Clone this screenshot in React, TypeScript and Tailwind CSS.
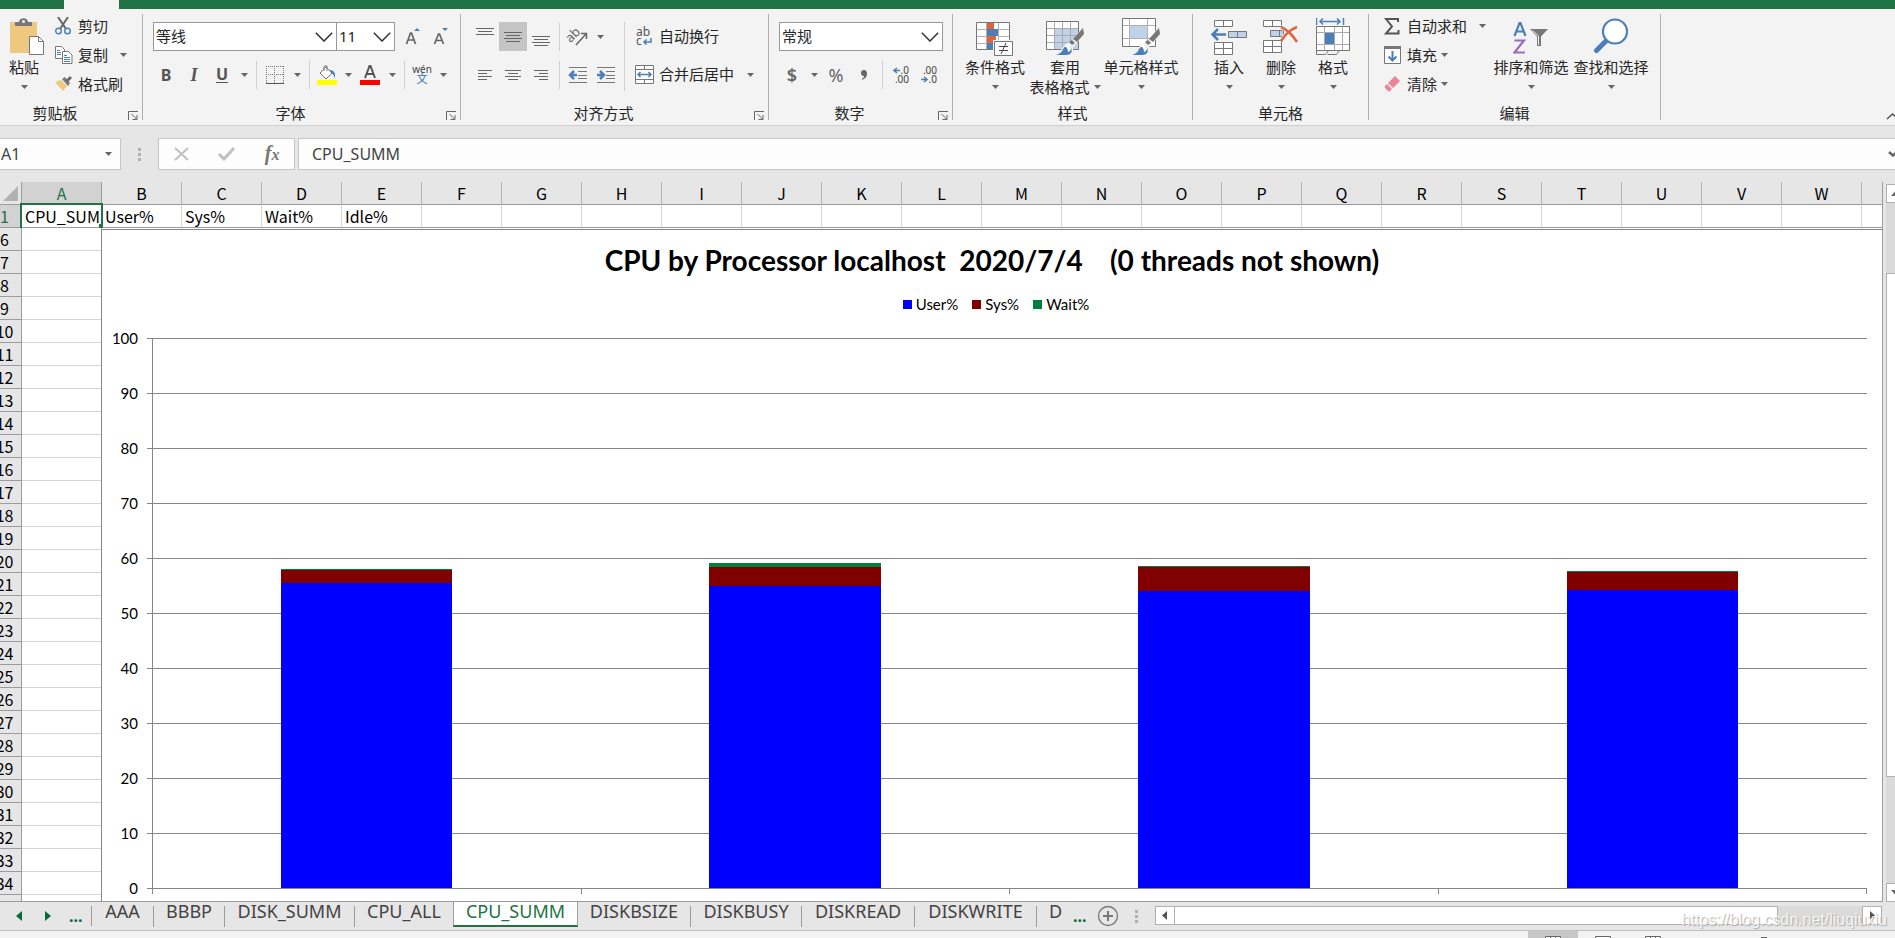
import type { ReactNode } from 'react'

const COLUMNS = 'ABCDEFGHIJKLMNOPQRSTUVWX'.split('')
const FIRST_ROW = ['CPU_SUMM', 'User%', 'Sys%', 'Wait%', 'Idle%']
const ROWS = Array.from({ length: 30 }, (_, i) => i + 6)
const AXIS = [100, 90, 80, 70, 60, 50, 40, 30, 20, 10, 0]

const CPUS = [
  { user: 55.5, sys: 2.36, wait: 0.19 },
  { user: 54.95, sys: 3.45, wait: 0.73 },
  { user: 54, sys: 4.4, wait: 0.19 },
  { user: 54.2, sys: 3.3, wait: 0.19 },
]

const TABS = [
  { name: 'AAA', width: 'w-[62px]' },
  { name: 'BBBP', width: 'w-[71px]' },
  { name: 'DISK_SUMM', width: 'w-[130px]' },
  { name: 'CPU_ALL', width: 'w-[98px]' },
  { name: 'CPU_SUMM', width: 'w-[125px]' },
  { name: 'DISKBSIZE', width: 'w-[113px]' },
  { name: 'DISKBUSY', width: 'w-[111px]' },
  { name: 'DISKREAD', width: 'w-[113px]' },
  { name: 'DISKWRITE', width: 'w-[122px]' },
]

function Caret() {
  return (
    <svg width="7" height="4" viewBox="0 0 7 4" className="shrink-0">
      <path d="M0 0h7L3.5 4z" fill="#666" />
    </svg>
  )
}

function CaretButton({ label }: { label: string }) {
  return (
    <button aria-label={label} className="flex h-7 w-4 items-center justify-center">
      <Caret />
    </button>
  )
}

function Tool({ label, width = 'w-7', active, children }: { label: string; width?: string; active?: boolean; children: ReactNode }) {
  return (
    <button aria-label={label} className={`flex h-[29px] shrink-0 items-center justify-center ${width} ${active ? 'bg-[#c5c5c5]' : ''}`}>
      {children}
    </button>
  )
}

function Separator() {
  return <div className="mx-1 h-7 w-px bg-[#d0d0d0]" />
}

function Group({ title, width, launcher, children }: { title: string; width: string; launcher?: boolean; children: ReactNode }) {
  return (
    <section className={`flex shrink-0 flex-col border-r border-[#b1b1b1] ${width}`}>
      <div className="flex flex-1">{children}</div>
      <div className="flex h-3.5 items-center">
        <h2 className="flex-1 text-center leading-[14px]">{title}</h2>
        {launcher && (
          <button aria-label={title + '设置'} className="w-[22px] pl-2 pt-1">
            <svg width="10" height="9" viewBox="0 0 10 9" fill="none" stroke="#666">
              <path d="M.5 9V.5H10M3.5 3l5 5M9 4v4.5H4.5" />
            </svg>
          </button>
        )}
      </div>
    </section>
  )
}

function BigButton({ icon, text, second, width }: { icon: ReactNode; text: string; second?: string; width: string }) {
  return (
    <button className={`flex shrink-0 flex-col items-center whitespace-nowrap ${width}`}>
      <span className="mb-px flex h-[38px] items-end justify-center">{icon}</span>
      <span className="leading-5">{text}</span>
      <span className="flex h-5 items-center gap-1 leading-5">
        {second}
        <Caret />
      </span>
    </button>
  )
}

function SmallButton({ icon, text, caret }: { icon: ReactNode; text: string; caret?: string }) {
  return (
    <button className="flex h-7 items-center whitespace-nowrap">
      <span className="flex w-[23px] items-center">{icon}</span>
      {text}
      {caret && (
        <span className={caret}>
          <Caret />
        </span>
      )}
    </button>
  )
}

function Dropdown({ label, value, width }: { label: string; value: string; width: string }) {
  return (
    <div className={`relative shrink-0 ${width}`}>
      <select aria-label={label} defaultValue={value} className="h-[29px] w-full appearance-none border border-[#999] bg-white pl-0.5 text-[15px] text-[#262626]">
        <option>{value}</option>
      </select>
      <svg width="18" height="10" viewBox="0 0 18 10" className="pointer-events-none absolute right-1 top-2.5" fill="none" stroke="#333" strokeWidth="1.5">
        <path d="M.8.8 9 9 17.2.8" />
      </svg>
    </div>
  )
}

function Lines({ rows }: { rows: number[][] }) {
  return (
    <svg width="20" height="20" viewBox="0 0 20 20" stroke="#666">
      {rows.map(([x1, x2, y]) => (
        <path key={y} d={`M${x1} ${y}.5H${x2}`} />
      ))}
    </svg>
  )
}

function Indent({ right }: { right?: boolean }) {
  return (
    <svg width="20" height="18" viewBox="0 0 20 18" fill="none" stroke="#777">
      <path d="M1 1.5h18M10 5.5h9M10 9.5h9M10 12.5h9M1 16.5h18" />
      <path d={right ? 'M1 9h6M4 5l4 4-4 4' : 'M9 9H3M6 5 2 9l4 4'} stroke="#4a7fb8" strokeWidth="2.500" />
    </svg>
  )
}

function PasteIcon() {
  return (
    <svg width="35" height="38" viewBox="0 0 35 38" className="ml-1.5">
      <rect y="4" width="27" height="31" rx="1" fill="#edc87e" />
      <path d="M5 8V4h4c0-5 9-5 9 0h4v4z" fill="#777" />
      <circle cx="13.500" cy="3.500" r="1.500" fill="#f3f3f3" />
      <path d="M19.500 18.500h9l5 5v13h-14z" fill="#fff" stroke="#777" />
      <path d="M28.500 18.500v5h5" fill="none" stroke="#777" />
    </svg>
  )
}

function CutIcon() {
  return (
    <svg width="17" height="18" viewBox="0 0 17 18" fill="none">
      <path d="M3 0l8 12M13 0 5 12" stroke="#666" strokeWidth="2" />
      <circle cx="3.500" cy="14" r="2.800" stroke="#4a7fb8" strokeWidth="1.400" />
      <circle cx="12.500" cy="14" r="2.800" stroke="#4a7fb8" strokeWidth="1.400" />
    </svg>
  )
}

function CopyIcon() {
  return (
    <svg width="18" height="18" viewBox="0 0 18 18" fill="#fff" stroke="#777">
      <path d="M.5.5h6l3 3v9h-9z" />
      <path d="M2 4.500h3M2 6.500h4M2 8.500h4" stroke="#4a7fb8" />
      <path d="M7.500 5.500h6l3.500 3.500v8.500h-9.500z" />
      <path d="M9 9.500h3M9 11.500h6M9 13.500h6M9 15.500h6" stroke="#4a7fb8" />
    </svg>
  )
}

function BrushIcon() {
  return (
    <svg width="18" height="16" viewBox="0 0 18 16">
      <path d="M0 6 6 4l6 6-4 5z" fill="#edc87e" />
      <path d="m7 3 3-2 5 6-2 3z" fill="#777" />
      <path d="m11 4 4-4 2 2-4 4z" fill="#666" />
    </svg>
  )
}

function BordersIcon() {
  return (
    <svg width="18" height="18" viewBox="0 0 18 18" fill="none" stroke="#777">
      <path d="M.5 0v17M17.500 0v17M8.500 0v17M0 .5h18M0 8.500h18" strokeDasharray="1 1" />
      <path d="M0 17.500h18" stroke="#555" />
    </svg>
  )
}

function FillIcon() {
  return (
    <svg width="20" height="20" viewBox="0 0 20 20">
      <path d="m3 8 6-6 6 6-6 6z" fill="#fff" stroke="#777" />
      <path d="M7 6V2q0-2 3-1v5" fill="none" stroke="#777" />
      <path d="M13 5q6 0 5 9-1-5-4-6z" fill="#4a7fb8" />
      <path d="M0 15h20v5H0z" fill="#ff0" />
    </svg>
  )
}

function WrapIcon() {
  return (
    <svg width="18" height="18" viewBox="0 0 18 18" className="overflow-visible font-['Noto_Sans',sans-serif]">
      <text x="1" y="8" fontSize="12" fill="#555">ab</text>
      <text x="1" y="17" fontSize="12" fill="#555">c</text>
      <path d="M16 10v4H9M11.500 11.500 9 14l2.500 2.500" fill="none" stroke="#4a7fb8" strokeWidth="1.500" />
    </svg>
  )
}

function MergeIcon() {
  return (
    <svg width="19" height="19" viewBox="0 0 19 19" fill="#fff" stroke="#777">
      <path d="M.5.5h18v18H.5zM.5 4.500h18M.5 14.500h18M9.500.5v4M9.500 14.500v4" />
      <path d="M3 9.500h13M5.500 7 3 9.500 5.500 12M13.500 7 16 9.500 13.500 12" fill="none" stroke="#4a7fb8" strokeWidth="1.500" />
    </svg>
  )
}

function DecimalIcon({ less }: { less?: boolean }) {
  return (
    <svg width="18" height="18" viewBox="0 0 18 18" className="overflow-visible font-['Noto_Sans',sans-serif]" fontSize="10" fill="#444">
      <text x="17" y="8" textAnchor="end">{less ? '.00' : '.0'}</text>
      <text x="17" y="17" textAnchor="end">{less ? '.0' : '.00'}</text>
      <path d={less ? 'M1 13.500h6M4 11l3 2.500L4 16' : 'M8 4.500H2M5 2 2 4.500 5 7'} fill="none" stroke="#4a7fb8" strokeWidth="1.600" />
    </svg>
  )
}

function ConditionalIcon() {
  return (
    <svg width="38" height="34" viewBox="0 0 38 34">
      <path d="M.5.5h33v27H.5z" fill="#fff" />
      <path d="M11 1h7v6h-7zM11 14h9v7h-9z" fill="#dc6440" />
      <path d="M11 7h11v7H11zM11 21h6v6h-6z" fill="#4a7fb8" />
      <path d="M10.500 1v26M22.500 1v26M1 7.500h10M22 7.500h11M1 14.500h10M22 14.500h11M1 21.500h10" stroke="#b0b0b0" />
      <path d="M.5.5h33v27H.5z" fill="none" stroke="#777" />
      <path d="M17 18h21v16H17z" fill="#f3f3f3" />
      <path d="M18.500 19.500h18v14h-18z" fill="#fff" stroke="#777" />
      <path d="M23 24.500h9M23 28.500h9M30 21l-5 11" stroke="#444" />
    </svg>
  )
}

function BrushOverlay() {
  return (
    <>
      <path d="M8 37q7-2 8-7l5-5 4-1 11-14h3v6L27 29q2 8-11 8z" fill="#f3f3f3" />
      <path d="m37 10 1 6-7 8-4-3z" fill="#777" />
      <path d="m26 22 3 3-3 2-3-3z" fill="#777" />
      <path d="M10 37q6-2 7-6 3-5 8-2 3 9-7 8z" fill="#4a7fb8" />
      <path d="M19 28q5-2 6 2 0 3-3 4 0-4-3-6z" fill="#fff" />
    </>
  )
}

function TableStyleIcon() {
  return (
    <svg width="38" height="37" viewBox="0 1 38 37">
      <path d="M.5 3.500h32v28H.5z" fill="#fff" />
      <path d="M9 10h23v21H9z" fill="#c0d2e8" />
      <path d="M8.500 4v27M16.500 4v27M24.500 4v27M1 10.500h31M1 17.500h31M1 24.500h31" stroke="#aaa" />
      <path d="M.5 3.500h32v28H.5z" fill="none" stroke="#777" />
      <BrushOverlay />
    </svg>
  )
}

function CellStyleIcon() {
  return (
    <svg width="38" height="38" viewBox="0 0 38 38">
      <path d="M.5.5h33v28H.5z" fill="#fff" />
      <path d="M7.500 1v27M25.500 1v27M1 7.500h32M1 20.500h32" stroke="#b0b0b0" />
      <path d="M8 8h17v12H8z" fill="#c0d2e8" />
      <path d="M.5.5h33v28H.5z" fill="none" stroke="#777" />
      <BrushOverlay />
    </svg>
  )
}

function InsertIcon() {
  return (
    <svg width="36" height="37" viewBox="0 0 36 37" fill="#fff" stroke="#777">
      <path d="M3.500 1.500h18v6h-18zM12.500 1.500v6M3.500 23.500h18v12h-18zM12.500 23.500v12M3.500 29.500h18" />
      <path d="M17.500 12.500h18v6h-18zM26.500 12.500v6" fill="#c0d2e8" />
      <path d="M15 15.500H2M7 10l-5.500 5.500L7 21" fill="none" stroke="#4a7fb8" strokeWidth="2.500" />
    </svg>
  )
}

function DeleteIcon() {
  return (
    <svg width="36" height="37" viewBox="0 0 36 37" fill="#fff" stroke="#777">
      <path d="M.5 1.500h18v6H.5zM9.500 1.500v6M.5 21.500h18v12H.5zM9.500 21.500v12M.5 27.500h18" />
      <path d="M7.500 11.500h13v6h-13zM16.500 11.500v6" fill="#c0d2e8" />
      <path d="M18 8q9 3 15 15M34 8Q24 12 19 22" fill="none" stroke="#f3f3f3" strokeWidth="5" />
      <path d="M18 8q9 4 16 15M34 8Q24 12 18 22" fill="none" stroke="#dc6440" strokeWidth="2.500" />
    </svg>
  )
}

function FormatIcon() {
  return (
    <svg width="34" height="38" viewBox="0 0 34 38" fill="none" stroke="#777">
      <path d="M.5 0v7M27.500 0v7M4 3.500h20M7 .5l-3 3 3 3M21 .5l3 3-3 3" stroke="#4a7fb8" strokeWidth="1.500" />
      <path d="M.5 8.500h33v24H.5z" fill="#fff" />
      <path d="M8.500 9v24M18.500 9v24M26.500 9v24M1 14.500h32M1 26.500h32" stroke="#aaa" />
      <path d="M9 15h9v11H9z" fill="#4a7fb8" stroke="none" />
      <path d="M.5 8.500h33v24H.5zM.5 32v4.500h9l3-4M11.500 36.500h9l3-4" />
    </svg>
  )
}

function SigmaIcon() {
  return (
    <svg width="16" height="17" viewBox="0 0 16 17" fill="none" stroke="#555" strokeWidth="2">
      <path d="M14 4V1H2l6 7.500L2 15.500h12.500V12" />
    </svg>
  )
}

function DownIcon() {
  return (
    <svg width="17" height="18" viewBox="0 0 17 18">
      <path d="M.5.5h16v17H.5z" fill="#fff" stroke="#777" />
      <path d="M0 0h17v3H0z" fill="#777" />
      <path d="M8.500 5v9M4.500 10.500l4 4 4-4" fill="none" stroke="#4a7fb8" strokeWidth="2" />
    </svg>
  )
}

function EraserIcon() {
  return (
    <svg width="17" height="16" viewBox="0 0 17 16" fill="#e8859a">
      <path d="m11 0 5 5-7 7-5-5zM3 8l5 5-2 2q-1 1-2 0l-3-3q-1-1 0-2z" />
    </svg>
  )
}

function SortIcon() {
  return (
    <svg width="36" height="36" viewBox="0 0 36 36" fill="none">
      <path d="M1.500 16 6.500 3h1l5 13M3.500 11.500h7" stroke="#4a7fb8" strokeWidth="2.200" />
      <path d="M1.500 20.500h9.500L1.500 32.500H12" stroke="#9b6bbf" strokeWidth="2.200" />
      <path d="M17 9h18l-7 7.500V26h-4v-9.500z" fill="#777" />
      <path d="m19.500 10.500 6 5.500v9" stroke="#f3f3f3" />
    </svg>
  )
}

function SearchIcon() {
  return (
    <svg width="36" height="38" viewBox="0 0 36 38" fill="none" stroke="#4a7fb8">
      <path d="M3.500 32.500 15 21" strokeWidth="5" strokeLinecap="round" />
      <circle cx="22" cy="13.500" r="12" strokeWidth="2.200" fill="#fff" />
    </svg>
  )
}

function Ribbon() {
  return (
    <div className="flex h-[117px] shrink-0 border-b border-[#d0d0d0] bg-[#f3f3f3] py-[5px] text-[15px] text-[#262626]">
      <Group title="剪贴板" width="-ml-2.5 w-[153px]" launcher>
        <div className="pl-2.5 pt-1">
          <BigButton icon={<PasteIcon />} text="粘贴" width="w-12" />
        </div>
        <div className="-mt-0.5 flex flex-col gap-px pl-[7px]">
          <SmallButton icon={<CutIcon />} text="剪切" />
          <SmallButton icon={<CopyIcon />} text="复制" caret="pl-3" />
          <SmallButton icon={<BrushIcon />} text="格式刷" />
        </div>
      </Group>

      <Group title="字体" width="w-[318px]" launcher>
        <div className="flex flex-col gap-[9px] pl-[9px] pt-2">
          <div className="flex items-center">
            <Dropdown label="字体" value="等线" width="ml-px w-[184px]" />
            <Dropdown label="字号" value="11" width="-ml-px w-[59px]" />
            <Tool label="增大字号" width="w-9">
              <svg width="16" height="18" viewBox="0 0 16 18">
                <path d="m1.500 16 4-11h1l4 11M3 12h6" fill="none" stroke="#666" strokeWidth="1.700" />
                <path d="M9 3h6l-3-3z" fill="#4a7fb8" />
              </svg>
            </Tool>
            <Tool label="减小字号" width="w-5">
              <svg width="16" height="18" viewBox="0 0 16 18">
                <path d="m1.500 16 4-10h1l4 10M3 12.500h6" fill="none" stroke="#666" strokeWidth="1.700" />
                <path d="M9 0h6l-3 3z" fill="#4a7fb8" />
              </svg>
            </Tool>
          </div>
          <div className="flex items-center">
            <Tool label="加粗">
              <b className="text-base text-[#555]">B</b>
            </Tool>
            <Tool label="倾斜">
              <i className="font-['Liberation_Serif',serif] text-lg font-bold text-[#555]">I</i>
            </Tool>
            <Tool label="下划线">
              <span className="border-b border-[#555] text-base font-bold leading-4 text-[#555]">U</span>
            </Tool>
            <CaretButton label="下划线选项" />
            <Separator />
            <Tool label="边框">
              <BordersIcon />
            </Tool>
            <CaretButton label="边框选项" />
            <Separator />
            <Tool label="填充颜色" width="w-[26px]">
              <FillIcon />
            </Tool>
            <CaretButton label="填充颜色选项" />
            <Tool label="字体颜色">
              <svg width="20" height="20" viewBox="0 0 20 20">
                <path d="m5 13 4.500-12h1L15 13M6.500 9h7" fill="none" stroke="#555" strokeWidth="2" />
                <path d="M0 15h20v5H0z" fill="#f00" />
              </svg>
            </Tool>
            <CaretButton label="字体颜色选项" />
            <Separator />
            <Tool label="拼音" width="w-[26px]">
              <span className="flex flex-col text-[10px] leading-[8px] text-[#444]">
                wén<span className="text-[11px] leading-[11px] text-[#2f6eb0]">文</span>
              </span>
            </Tool>
            <CaretButton label="拼音选项" />
          </div>
        </div>
      </Group>

      <Group title="对齐方式" width="w-[308px]" launcher>
        <div className="flex flex-col gap-[9px] pl-2.5 pt-2">
          <div className="flex items-center">
            <Tool label="顶端对齐">
              <Lines rows={[[1, 19, 1], [3, 17, 4], [1, 19, 7]]} />
            </Tool>
            <Tool label="垂直居中" active>
              <Lines rows={[[1, 19, 5], [3, 17, 8], [1, 19, 11], [3, 17, 14]]} />
            </Tool>
            <Tool label="底端对齐">
              <Lines rows={[[1, 19, 9], [3, 17, 12], [1, 19, 15], [3, 17, 18]]} />
            </Tool>
            <Separator />
            <Tool label="方向">
              <svg width="20" height="20" viewBox="0 0 20 20" className="overflow-visible font-['Noto_Sans',sans-serif]">
                <text x="-1" y="12" fontSize="13" fill="#666" transform="rotate(-45 6 10)">ab</text>
                <path d="M8 18 18 7M13 6.500h5.500V12" fill="none" stroke="#666" strokeWidth="1.500" />
              </svg>
            </Tool>
            <CaretButton label="方向选项" />
          </div>
          <div className="flex items-center">
            <Tool label="左对齐">
              <Lines rows={[[3, 17, 5], [3, 12, 8], [3, 17, 11], [3, 12, 14]]} />
            </Tool>
            <Tool label="居中">
              <Lines rows={[[2, 18, 5], [5, 15, 8], [2, 18, 11], [5, 15, 14]]} />
            </Tool>
            <Tool label="右对齐">
              <Lines rows={[[3, 17, 5], [8, 17, 8], [3, 17, 11], [8, 17, 14]]} />
            </Tool>
            <Separator />
            <Tool label="减少缩进量">
              <Indent />
            </Tool>
            <Tool label="增加缩进量">
              <Indent right />
            </Tool>
          </div>
        </div>
        <div className="ml-1 mt-2 flex h-[69px] flex-col gap-[9px] border-l border-[#d0d0d0] pl-2.5">
          <button className="flex h-[29px] items-center gap-1.5 whitespace-nowrap">
            <WrapIcon />
            自动换行
          </button>
          <div className="flex items-center">
            <button className="flex h-[29px] items-center gap-[5px] whitespace-nowrap">
              <MergeIcon />
              合并后居中
            </button>
            <span className="pl-2">
              <CaretButton label="合并选项" />
            </span>
          </div>
        </div>
      </Group>

      <Group title="数字" width="w-[184px]" launcher>
        <div className="flex flex-col gap-[9px] pl-[9px] pt-2">
          <Dropdown label="数字格式" value="常规" width="ml-px w-[164px]" />
          <div className="flex items-center text-[#666]">
            <Tool label="会计数字格式">
              <span className="text-lg font-semibold">$</span>
            </Tool>
            <CaretButton label="货币选项" />
            <Tool label="百分比">
              <span className="text-lg">%</span>
            </Tool>
            <Tool label="千位分隔">
              <svg width="6" height="10" viewBox="0 0 6 10" fill="#666">
                <path d="M3 0q3 0 3 3.500Q6 8 1 10V9q2-1 2-3Q0 6 0 3t3-3" />
              </svg>
            </Tool>
            <Separator />
            <Tool label="增加小数位">
              <DecimalIcon />
            </Tool>
            <Tool label="减少小数位">
              <DecimalIcon less />
            </Tool>
          </div>
        </div>
      </Group>

      <Group title="样式" width="w-[240px]">
        <div className="flex pl-[5px] pt-1">
          <BigButton icon={<ConditionalIcon />} text="条件格式" width="w-[74px]" />
          <BigButton icon={<TableStyleIcon />} text="套用" second="表格格式" width="w-[66px]" />
          <BigButton icon={<CellStyleIcon />} text="单元格样式" width="w-[86px]" />
        </div>
      </Group>

      <Group title="单元格" width="w-[176px]">
        <div className="flex pl-2.5 pt-1">
          <BigButton icon={<InsertIcon />} text="插入" width="w-[52px]" />
          <BigButton icon={<DeleteIcon />} text="删除" width="w-[52px]" />
          <BigButton icon={<FormatIcon />} text="格式" width="w-[52px]" />
        </div>
      </Group>

      <Group title="编辑" width="w-[292px]">
        <div className="-mt-0.5 flex flex-col gap-px pl-[15px]">
          <SmallButton icon={<SigmaIcon />} text="自动求和" caret="pl-3" />
          <SmallButton icon={<DownIcon />} text="填充" caret="pl-1" />
          <SmallButton icon={<EraserIcon />} text="清除" caret="pl-1" />
        </div>
        <div className="flex pl-[5px] pt-1">
          <BigButton icon={<SortIcon />} text="排序和筛选" width="w-20" />
          <BigButton icon={<SearchIcon />} text="查找和选择" width="w-20" />
        </div>
      </Group>

      <button aria-label="折叠功能区" className="-mr-1 ml-auto self-end">
        <svg width="13" height="8" viewBox="0 0 13 8" fill="none" stroke="#555" strokeWidth="1.500">
          <path d="m1 7 5.500-5L12 7" />
        </svg>
      </button>
    </div>
  )
}

function Dots() {
  return (
    <span className="flex flex-col gap-0.5">
      <i className="size-[3px] bg-[#b0b0b0]" />
      <i className="size-[3px] bg-[#b0b0b0]" />
      <i className="size-[3px] bg-[#b0b0b0]" />
    </span>
  )
}

function FormulaBar() {
  return (
    <div className="flex shrink-0 py-3 text-base text-[#444]">
      <div className="flex h-8 w-[121px] items-center border border-l-0 border-[#c6c6c6] bg-[#fdfdfd] pr-2">
        <input aria-label="名称框" defaultValue="A1" className="min-w-0 flex-1 bg-transparent pl-px outline-none" />
        <Caret />
      </div>
      <div className="flex w-[37px] items-center justify-center">
        <Dots />
      </div>
      <div className="flex h-8 w-[137px] items-center justify-around border border-[#c6c6c6] bg-[#fdfdfd]">
        <button aria-label="取消">
          <svg width="15" height="14" viewBox="0 0 15 14" stroke="#c0c0c0" strokeWidth="2">
            <path d="m1 1 13 12M14 1 1 13" />
          </svg>
        </button>
        <button aria-label="输入">
          <svg width="18" height="14" viewBox="0 0 18 14" fill="none" stroke="#c0c0c0" strokeWidth="3">
            <path d="m1 7 5 5L16 1" />
          </svg>
        </button>
        <button aria-label="插入函数" className="font-['Liberation_Serif',serif] text-xl font-bold italic leading-6 text-[#777]">
          f<span className="text-base">x</span>
        </button>
      </div>
      <div className="ml-[3px] flex h-8 flex-1 items-center border border-r-0 border-[#c6c6c6] bg-[#fdfdfd]">
        <input aria-label="编辑栏" defaultValue="CPU_SUMM" className="min-w-0 flex-1 bg-transparent pl-[13px] outline-none" />
        <svg width="9" height="6" viewBox="0 0 9 6" fill="none" stroke="#666" strokeWidth="2.500" className="-mr-0.5">
          <path d="m1 1 4 3.500L9 1" />
        </svg>
      </div>
    </div>
  )
}

function Chart() {
  return (
    <figure className="absolute bottom-0 left-[101px] right-0 top-[47px] flex flex-col border-l border-t border-[#868686] bg-white pt-3.5 font-['Lato',sans-serif] text-[15px] text-black">
      <figcaption className="whitespace-pre text-center text-[28px] font-bold leading-8">{'CPU by Processor localhost  2020/7/4    (0 threads not shown)'}</figcaption>
      <ul className="mb-6 mt-[18px] flex justify-center gap-3.5 pl-2 leading-5">
        <li className="flex items-center gap-1">
          <i className="size-[9px] bg-[#0000ff]" />
          User%
        </li>
        <li className="flex items-center gap-1">
          <i className="size-[9px] bg-[#800000]" />
          Sys%
        </li>
        <li className="flex items-center gap-1">
          <i className="size-[9px] bg-[#008040]" />
          Wait%
        </li>
      </ul>
      <div className="flex flex-1 pb-[13px] pr-[15px]">
        <div className="-my-2.5 flex w-9 flex-col justify-between text-right leading-5">
          {AXIS.map((n) => (
            <span key={n}>{n}</span>
          ))}
        </div>
        <div className="-mb-px ml-[9px] flex w-[5px] flex-col">
          {AXIS.map((n) => (
            <i key={n} className={n ? 'flex-1 border-t border-[#868686]' : 'border-t border-[#868686]'} />
          ))}
        </div>
        <div className="relative flex-1">
          <div className="absolute inset-0 -bottom-px flex flex-col">
            {AXIS.map((n) => (
              <i key={n} className={n ? 'flex-1 border-t border-[#868686]' : 'border-t border-[#868686]'} />
            ))}
          </div>
          <div className="relative flex h-full">
            {CPUS.map((cpu, i) => (
              <div key={i} className="flex h-full flex-1 flex-col items-center justify-end">
                <div className="w-2/5 bg-[#008040]" style={{ height: `${cpu.wait}%` }} />
                <div className="w-2/5 bg-[#800000]" style={{ height: `${cpu.sys}%` }} />
                <div className="w-2/5 bg-[#0000ff]" style={{ height: `${cpu.user}%` }} />
              </div>
            ))}
          </div>
          <div className="absolute inset-x-0 top-full flex h-1.5">
            {CPUS.map((_, i) => (
              <i key={i} className="flex-1 border-l border-[#868686] last:border-r" />
            ))}
          </div>
          <div className="absolute inset-y-0 left-0 w-px bg-[#868686]" />
        </div>
      </div>
    </figure>
  )
}

function Sheet() {
  return (
    <div className="relative flex-1 overflow-hidden border-b border-r border-[#9c9c9c]">
      <table className="absolute w-0 table-fixed border-separate border-spacing-0 font-['Noto_Sans_CJK_SC',sans-serif] text-base leading-[22px] text-black">
        <colgroup>
          <col className="w-[22px]" />
          {COLUMNS.map((c) => (
            <col key={c} className="w-20" />
          ))}
        </colgroup>
        <thead>
          <tr className="h-[23px]">
            <th className="border-b border-r border-[#9c9c9c] bg-[#e6e6e6] p-0">
              <svg width="15" height="15" viewBox="0 0 15 15" className="ml-[3px]">
                <path d="M15 0v15H0z" fill="#b2b2b2" />
              </svg>
            </th>
            {COLUMNS.map((c) => (
              <th
                key={c}
                scope="col"
                className={`border-b border-r p-0 font-normal ${c === 'A' ? 'border-[#9c9c9c] bg-[#d2d2d2] text-[#217346]' : 'border-b-[#9c9c9c] border-r-[#b4b4b4] bg-[#e6e6e6]'}`}
              >
                {c}
              </th>
            ))}
          </tr>
        </thead>
        <tbody>
          <tr className="h-[23px]">
            <th scope="row" className="border-b border-r border-[#9c9c9c] bg-[#d2d2d2] p-0 font-normal text-[#217346]">
              <div className="flex justify-center pr-3">1</div>
            </th>
            {COLUMNS.map((c, i) => (
              <td key={c} className={`relative border-b border-r border-b-[#9c9c9c] bg-white p-0 ${i ? 'border-r-[#d4d4d4]' : 'border-r-[#9c9c9c]'}`}>
                <div className="h-[22px] overflow-hidden whitespace-nowrap pl-[3px]">{FIRST_ROW[i]}</div>
                {i === 0 && (
                  <div className="absolute -inset-x-0.5 -bottom-px -top-0.5 z-10 border-2 border-b-0 border-[#217346]">
                    <i className="absolute -right-0.5 bottom-0 size-1 bg-[#217346]" />
                  </div>
                )}
              </td>
            ))}
          </tr>
          {ROWS.map((r) => (
            <tr key={r} className="h-[23px]">
              <th scope="row" className="border-b border-r border-[#9c9c9c] bg-[#e6e6e6] p-0 font-normal">
                <div className="flex justify-center overflow-hidden pr-3">{r}</div>
              </th>
              {COLUMNS.map((c) => (
                <td key={c} className="border-b border-r border-[#d4d4d4] bg-white p-0" />
              ))}
            </tr>
          ))}
        </tbody>
      </table>
      <Chart />
    </div>
  )
}

function VerticalScroll() {
  return (
    <div className="ml-[3px] w-[9px] overflow-hidden pt-0.5">
      <div className="flex h-full w-[19px] flex-col bg-[#dadada]">
        <button aria-label="向上滚动" className="flex h-[19px] items-center justify-center border border-[#b0b0b0] bg-white">
          <svg width="9" height="5" viewBox="0 0 9 5">
            <path d="M0 5h9L4.500 0z" fill="#666" />
          </svg>
        </button>
        <div className="flex-[70]" />
        <div className="flex-[503] border border-[#b0b0b0] bg-white" />
        <div className="flex-[106]" />
        <button aria-label="向下滚动" className="flex h-[19px] items-center justify-center border border-[#b0b0b0] bg-white">
          <svg width="9" height="5" viewBox="0 0 9 5">
            <path d="M0 0h9L4.500 5z" fill="#666" />
          </svg>
        </button>
      </div>
    </div>
  )
}

function SheetTabs() {
  return (
    <div className="flex h-7 shrink-0 text-lg text-[#444]">
      <div className="flex w-[91px] shrink-0 items-center text-[#0b6a3a]">
        <button aria-label="上一个工作表" className="ml-4">
          <svg width="6" height="10" viewBox="0 0 6 10">
            <path d="M6 0v10L0 5z" fill="currentColor" />
          </svg>
        </button>
        <button aria-label="下一个工作表" className="ml-[23px]">
          <svg width="6" height="10" viewBox="0 0 6 10">
            <path d="M0 0v10l6-5z" fill="currentColor" />
          </svg>
        </button>
        <button aria-label="更多工作表" className="ml-[18px] text-base font-bold leading-6">...</button>
      </div>
      <i className="mt-1 h-5 w-px shrink-0 bg-[#9c9c9c]" />
      {TABS.map(({ name, width }) =>
        name === 'CPU_SUMM' ? (
          <button key={name} aria-current="page" className={`-mt-px h-[26px] shrink-0 border-x border-b-2 border-x-[#9c9c9c] border-b-[#217346] bg-white pb-1 leading-5 text-[#217346] ${width}`}>
            {name}
          </button>
        ) : (
          <button key={name} className={`mt-1 h-[21px] shrink-0 pb-2.5 leading-[11px] ${name === 'CPU_ALL' ? '' : 'border-r border-[#9c9c9c]'} ${width}`}>
            {name}
          </button>
        ),
      )}
      <button className="mt-1 h-[21px] w-7 shrink-0 pb-2.5 pl-3 text-left leading-[11px]">D</button>
      <span className="ml-2 text-base font-bold leading-7 text-[#0b6a3a]">...</span>
      <button aria-label="新工作表" className="ml-2.5 shrink-0">
        <svg width="22" height="22" viewBox="0 0 22 22" fill="none" stroke="#777">
          <circle cx="11" cy="11" r="9.500" strokeWidth="1.300" />
          <path d="M6 11h10M11 6v10" strokeWidth="2" />
        </svg>
      </button>
      <div className="flex w-9 shrink-0 items-center justify-center">
        <Dots />
      </div>
      <div className="mr-[13px] mt-1 flex h-[19px] flex-1 bg-[#dadada]">
        <button aria-label="向左滚动" className="flex w-5 items-center justify-center border border-[#b0b0b0] bg-white">
          <svg width="5" height="9" viewBox="0 0 5 9">
            <path d="M5 0v9L0 4.500z" fill="#555" />
          </svg>
        </button>
        <div className="-ml-px flex-[605] border border-[#b0b0b0] bg-white" />
        <div className="flex-[84]" />
        <button aria-label="向右滚动" className="flex w-5 items-center justify-center border border-[#b0b0b0] bg-white">
          <svg width="5" height="9" viewBox="0 0 5 9">
            <path d="M0 0v9l5-4.500z" fill="#555" />
          </svg>
        </button>
      </div>
    </div>
  )
}

function StatusBar() {
  return (
    <div className="flex h-2 shrink-0 justify-end overflow-hidden border-t border-[#c0c0c0] bg-[#f3f3f3] pr-32">
      <button aria-label="普通" className="flex w-[50px] justify-center bg-[#c6c6c6] pt-[5px]">
        <svg width="16" height="14" viewBox="0 0 16 14" fill="#fff" stroke="#666">
          <path d="M.5.5h15v13H.5zM5.500 0v13M10.500 0v13" />
        </svg>
      </button>
      <button aria-label="页面布局" className="flex w-[50px] justify-center pt-[5px]">
        <svg width="16" height="14" viewBox="0 0 16 14" fill="#fff" stroke="#666">
          <path d="M.5.5h15v13H.5z" />
        </svg>
      </button>
      <button aria-label="分页预览" className="flex w-[50px] justify-center pt-[5px]">
        <svg width="16" height="14" viewBox="0 0 16 14" fill="#fff" stroke="#666">
          <path d="M.5.5h15v13H.5zM5.500 0v6M10.500 0v6" />
        </svg>
      </button>
      <i className="ml-[83px] mt-1.5 h-px w-1.5 bg-[#666]" />
    </div>
  )
}

export default function App() {
  return (
    <div className="relative flex h-screen flex-col overflow-hidden bg-[#e6e6e6] font-['Noto_Sans','Noto_Sans_CJK_SC',sans-serif]">
      <header className="flex h-[9px] shrink-0 bg-[#217346] pl-16">
        <div className="w-[55px] bg-[#f3f3f3]" />
      </header>
      <Ribbon />
      <FormulaBar />
      <main className="flex min-h-0 flex-1">
        <Sheet />
        <VerticalScroll />
      </main>
      <SheetTabs />
      <StatusBar />
      <span className="absolute bottom-2 right-2 font-['Liberation_Sans',sans-serif] text-base leading-5 text-white/80 [text-shadow:1px_1px_1px_#aaa]">https://blog.csdn.net/liuqiuxiu</span>
    </div>
  )
}
